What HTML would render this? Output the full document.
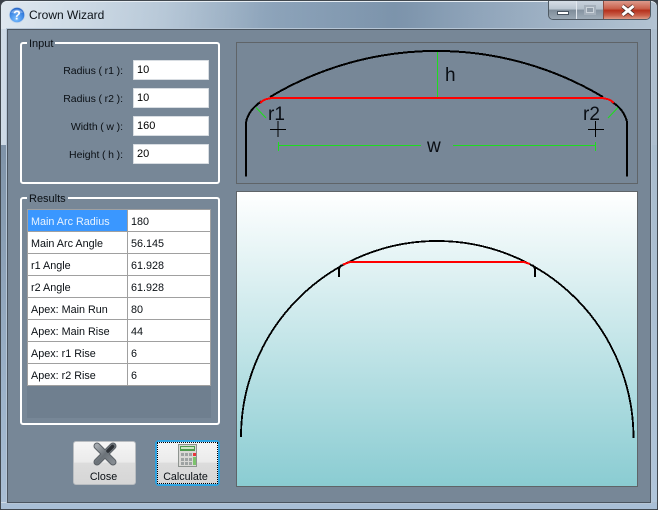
<!DOCTYPE html>
<html><head><meta charset="utf-8"><style>
html,body{margin:0;padding:0;background:#3a4048}
body{position:relative;width:658px;height:510px;overflow:hidden;font-family:"Liberation Sans",sans-serif;font-size:10.8px;color:#000}
.a{position:absolute;box-sizing:border-box}
.t{position:absolute;white-space:nowrap;line-height:14px}
.inp{position:absolute;box-sizing:border-box;left:133px;width:76px;height:20px;background:#fff;border-radius:1px;padding:3px 0 0 4px;line-height:14px;font-size:11px;box-shadow:0 0 0 1px #d8dde2 inset}
.lab{position:absolute;right:535px;white-space:nowrap;line-height:14px;color:#0a0f14;font-size:10.500px;word-spacing:-.3px}
.grp{position:absolute;box-sizing:border-box;left:20px;width:200px;border:2px solid #fff;border-radius:3px}
.leg{position:absolute;left:27px;background:#778797;padding:0 2px;line-height:14px;color:#0a0f14;font-size:11px}
.cell{position:absolute;background:#fff;line-height:14px;white-space:nowrap;padding-top:5px;box-sizing:border-box;height:21px;color:#0a0f14}
.btn{position:absolute;top:441px;width:63px;height:44px;border-radius:3px;background:linear-gradient(#f5f5f5 0,#ebebeb 48%,#dcdcdc 50%,#d6d6d6 100%);box-sizing:border-box;border:1px solid #b9bdc1;text-align:center}
</style></head><body>
<div class="a" style="left:0;top:0;width:658px;height:510px;border-radius:7px 7px 3px 3px;background:linear-gradient(90deg,#cfdbe6 0,#b3c4d4 25%,#8fa5bb 42%,#7d94ab 60%,#8ea3b9 72%,#aebfcf 100%);border:1px solid #41484f"></div>
<div class="a" style="left:1px;top:1px;width:656px;height:28px;border-top:1px solid #e6edf3;border-radius:6px 6px 0 0;background:linear-gradient(100deg,rgba(235,242,247,.55) 0,rgba(200,215,228,.35) 22%,rgba(130,155,180,.25) 40%,rgba(120,145,170,.2) 62%,rgba(190,205,218,.3) 100%)"></div>
<div class="a" style="left:1px;top:145px;width:6px;height:357px;background:linear-gradient(#7f93a8,#9db3ca 70%,#a9bed4)"></div>
<div class="a" style="left:651px;top:145px;width:6px;height:357px;background:linear-gradient(#a9bccd,#b0c5da)"></div>
<div class="a" style="left:1px;top:503px;width:656px;height:6px;background:#a9bfd6"></div>

<svg class="a" style="left:8px;top:6px" width="18" height="18" viewBox="0 0 18 18"><defs><radialGradient id="q" cx=".45" cy=".75" r=".8"><stop offset="0" stop-color="#7cc0ff"/><stop offset=".6" stop-color="#3b86e4"/><stop offset="1" stop-color="#2058b8"/></radialGradient></defs><circle cx="9" cy="9" r="7.7" fill="url(#q)" stroke="#c4d6ea" stroke-width=".8"/><path d="M3 6.500C5 2.500 13 2.500 15 6.500 11 8 7 8 3 6.500Z" fill="#fff" opacity=".3"/><text x="9" y="13.500" text-anchor="middle" font-family="Liberation Sans" font-size="12.500" font-weight="bold" fill="#fff">?</text></svg>
<div class="t" style="left:29px;top:8px;font-size:12px;color:#0c1218">Crown Wizard</div>

<div class="a" style="left:548px;top:1px;width:103px;height:19px;border:1px solid #4f5a64;border-top:none;border-radius:0 0 5px 5px;overflow:hidden;background:#8b9aa8">
<div class="a" style="left:0;top:0;width:28px;height:18px;background:linear-gradient(#d6dee6 0,#b9c5d0 45%,#7e8c99 50%,#9aa8b4 100%);border-right:1px solid #e2e8ee"></div>
<div class="a" style="left:28px;top:0;width:27px;height:18px;background:linear-gradient(#c8d2dc 0,#b4c0cb 45%,#8593a0 50%,#a0adb9 100%);border-right:1px solid #8e4a3e"></div>
<div class="a" style="left:55px;top:0;width:47px;height:18px;background:linear-gradient(#dd9a8c 0,#c9614c 42%,#b5301c 52%,#c9604a 80%,#dc9a86 100%)"></div>
<div class="a" style="left:8px;top:10px;width:12px;height:4px;background:#fff;border:1px solid #46525e"></div>
<div class="a" style="left:35px;top:4px;width:12px;height:10px;border:2px solid #a5b0bb;background:#cdd5dc"><div class="a" style="left:1px;top:1px;width:6px;height:4px;background:#909ca8"></div></div>
<svg class="a" style="left:70px;top:3px" width="18" height="13" viewBox="0 0 18 13"><path d="M3.500 2L14.500 11M14.500 2L3.500 11" stroke="#4a2a26" stroke-width="4.400" fill="none"/><path d="M3.500 2L14.500 11M14.500 2L3.500 11" stroke="#fff" stroke-width="3" fill="none"/></svg>
</div>

<div class="a" style="left:7px;top:29px;width:644px;height:474px;background:#778797;border:1px solid #4b5560;box-shadow:0 0 0 1px #b6c6d6"></div>

<div class="grp" style="top:42px;height:142px"></div>
<div class="leg" style="top:37px">Input</div>
<div class="lab" style="top:64px">Radius ( r1 ):</div>
<div class="lab" style="top:92px">Radius ( r2 ):</div>
<div class="lab" style="top:120px">Width ( w ):</div>
<div class="lab" style="top:148px">Height ( h ):</div>
<div class="inp" style="top:60px">10</div>
<div class="inp" style="top:88px">10</div>
<div class="inp" style="top:116px">160</div>
<div class="inp" style="top:144px">20</div>

<div class="grp" style="top:197px;height:228px"></div>
<div class="leg" style="top:192px">Results</div>
<div class="a" style="left:27px;top:209px;width:184px;height:209px;background:#6f7f8f"></div>
<div class="a" style="left:27px;top:209px;width:184px;height:177px;background:#a0a0a0"></div>
<div class="cell" style="left:28px;top:210px;width:99px;background:#3a97ff;color:#e8f3ff;padding-left:3px">Main Arc Radius</div><div class="cell" style="left:128px;top:210px;width:82px;padding-left:3px">180</div>
<div class="cell" style="left:28px;top:232px;width:99px;padding-left:3px">Main Arc Angle</div><div class="cell" style="left:128px;top:232px;width:82px;padding-left:3px">56.145</div>
<div class="cell" style="left:28px;top:254px;width:99px;padding-left:3px">r1 Angle</div><div class="cell" style="left:128px;top:254px;width:82px;padding-left:3px">61.928</div>
<div class="cell" style="left:28px;top:276px;width:99px;padding-left:3px">r2 Angle</div><div class="cell" style="left:128px;top:276px;width:82px;padding-left:3px">61.928</div>
<div class="cell" style="left:28px;top:298px;width:99px;padding-left:3px">Apex: Main Run</div><div class="cell" style="left:128px;top:298px;width:82px;padding-left:3px">80</div>
<div class="cell" style="left:28px;top:320px;width:99px;padding-left:3px">Apex: Main Rise</div><div class="cell" style="left:128px;top:320px;width:82px;padding-left:3px">44</div>
<div class="cell" style="left:28px;top:342px;width:99px;padding-left:3px">Apex: r1 Rise</div><div class="cell" style="left:128px;top:342px;width:82px;padding-left:3px">6</div>
<div class="cell" style="left:28px;top:364px;width:99px;padding-left:3px">Apex: r2 Rise</div><div class="cell" style="left:128px;top:364px;width:82px;padding-left:3px">6</div>

<div class="btn" style="left:73px"></div>
<div class="t" style="left:72px;top:470px;width:63px;text-align:center;font-size:10.700px;color:#0a0f14">Close</div>
<svg class="a" style="left:92px;top:441px" width="26" height="26" viewBox="0 0 26 26"><defs><linearGradient id="x" x1="0" y1="0" x2="1" y2="1"><stop offset="0" stop-color="#a4a9ae"/><stop offset=".5" stop-color="#6b7278"/><stop offset="1" stop-color="#868c92"/></linearGradient></defs><path d="M5 5L21 21M21 5L5 21" stroke="#5a6066" stroke-width="7" stroke-linecap="round" fill="none"/><path d="M5 5L21 21M21 5L5 21" stroke="url(#x)" stroke-width="5" stroke-linecap="round" fill="none"/><path d="M20.500 5.500L16 10" stroke="#2c3035" stroke-width="3.500" stroke-linecap="round"/></svg>

<div class="btn" style="left:156px;border:1px solid #36a6e6;box-shadow:0 0 0 1px #29a3e0"></div>
<div class="a" style="left:157px;top:442px;width:61px;height:42px;border:1px dotted #000"></div>
<div class="t" style="left:154px;top:470px;width:63px;text-align:center;font-size:10.700px;color:#0a0f14">Calculate</div>
<svg class="a" style="left:178px;top:444px" width="20" height="24" viewBox="0 0 20 24" shape-rendering="crispEdges"><rect x=".5" y=".5" width="18" height="22" fill="#d9d9d6" stroke="#8e9490"/><rect x="2" y="2" width="15" height="5" fill="#4e9a4c"/><rect x="3" y="3" width="13" height="2" fill="#cfe6c6"/><g fill="#9ea3a3"><rect x="3" y="9" width="3" height="3"/><rect x="7" y="9" width="3" height="3"/><rect x="11" y="9" width="3" height="3"/><rect x="3" y="14" width="3" height="3"/><rect x="7" y="14" width="3" height="3"/><rect x="11" y="14" width="3" height="3"/><rect x="3" y="18" width="3" height="3"/><rect x="7" y="18" width="3" height="3"/><rect x="11" y="18" width="3" height="3"/></g><rect x="15" y="9" width="3" height="3" fill="#e8343a"/><rect x="15" y="13" width="3" height="8" fill="#7cc36c"/></svg>

<svg class="a" style="left:0;top:0" width="658" height="510" viewBox="0 0 658 510">
<defs><linearGradient id="bg" x1="0" y1="0" x2="0" y2="1"><stop offset="0" stop-color="#ffffff"/><stop offset="1" stop-color="#8accd2"/></linearGradient></defs>
<rect x="236.500" y="42.500" width="401" height="141" fill="#778797" stroke="#5f6468"/>
<rect x="236.500" y="191.500" width="401" height="295" fill="url(#bg)" stroke="#5f6468"/>
<path d="M256 107.500L266 118M618 107.500L608 118" stroke="#1edc1e" stroke-width="1.100" fill="none"/>
<g shape-rendering="crispEdges" fill="none">
<path d="M437.500 52V98M278.500 142V151M595.500 142V151M279 145.500H421M453 145.500H596" stroke="#1edc1e"/>
<path d="M278 121V137M270 129.500H286M595.500 121V137M588 129.500H604" stroke="#000"/>
<path d="M246 176.500V123C247 114 254 106 262 101M627 176.500V122C625 113 619 106 612 102" stroke="#000" stroke-width="2"/>
<path d="M270 97A324 324 0 0 1 603 97" stroke="#000" stroke-width="2"/>
<path d="M260 103C263 100 268 98 274 98H600C606 98 611 100 614 103" stroke="#f00" stroke-width="2"/>
<path d="M241 437A196 196 0 0 1 437 241A196 197 0 0 1 633.500 438" stroke="#000" stroke-width="1.800"/>
<path d="M339 277V270Q339 267 342 265M535 277V270Q535 267 532 265" stroke="#000" stroke-width="2"/>
<path d="M343 264.500L350 262H524L530 264" stroke="#f00" stroke-width="2"/>
</g>
<text x="445" y="81" font-family="Liberation Sans" font-size="19" fill="#0a0e14">h</text>
<text x="268" y="120" font-family="Liberation Sans" font-size="19" fill="#0a0e14">r1</text>
<text x="583" y="120" font-family="Liberation Sans" font-size="19" fill="#0a0e14">r2</text>
<text x="427" y="152" font-family="Liberation Sans" font-size="19" fill="#0a0e14">w</text>
</svg>
</body></html>
